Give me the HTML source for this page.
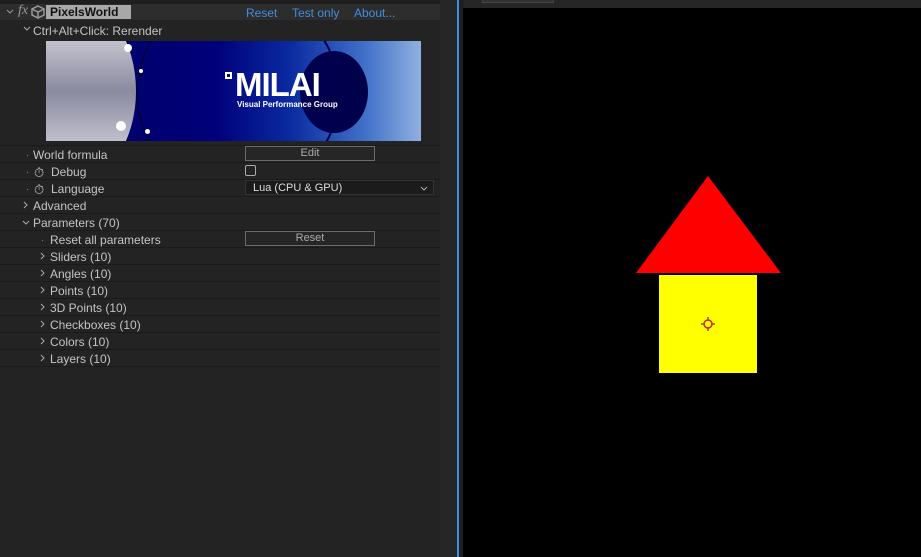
<!DOCTYPE html>
<html><head><style>
body{margin:0;width:921px;height:557px;background:#232323;position:relative;overflow:hidden;font-family:"Liberation Sans",sans-serif;font-size:12px;color:#c4c4c4}
.a{position:absolute}
.row{position:absolute;left:0;width:440px;height:16px;border-bottom:1px solid #1a1a1a;line-height:19px}
.btn{position:absolute;left:245px;width:128px;height:13px;border:1px solid #6a6a6a;background:#262626;text-align:center;line-height:13px;color:#aaa;font-size:11px;top:0px}
.ch{position:absolute;font-size:10px;color:#888}
svg.c{position:absolute}
</style></head><body>
<div class="a" style="left:0;top:0;width:440px;height:4px;background:#1e1e1e"></div>
<div class="a" style="left:440px;top:0;width:17px;height:557px;background:#262626"></div>
<div class="a" style="left:457px;top:0;width:2px;height:557px;background:#3a8ee0"></div>
<div class="a" style="left:459px;top:0;width:5px;height:557px;background:#1f1f1f"></div>
<div class="a" style="left:464px;top:0;width:457px;height:8px;background:#262626"></div>
<div class="a" style="left:482px;top:0;width:70px;height:2px;background:#333;border:1px solid #444;border-top:none"></div>
<div class="a" style="left:463px;top:8px;width:458px;height:549px;background:#000"></div>
<!-- header -->
<div class="a" style="left:0;top:4px;width:440px;height:16px;background:#2d2d2d"></div>
<svg class="c" style="left:6px;top:9px" width="8" height="6"><path d="M1 1L4 4L7 1" fill="none" stroke="#999"/></svg>
<div class="a" style="left:18px;top:3px;font-style:italic;color:#999;font-size:14px;font-family:'Liberation Serif',serif">fx</div>
<svg class="a" style="left:31px;top:5px" width="14" height="14" viewBox="0 0 14 14"><path d="M7 1L13 4V10L7 13L1 10V4Z M1 4L7 7L13 4 M7 7V13" fill="none" stroke="#999" stroke-width="1.5"/></svg>
<div class="a" style="left:46px;top:5px;width:85px;height:14px;background:#a8a8a8;color:#111;font-weight:bold;font-size:12px;line-height:15px;padding-left:4px;box-sizing:border-box">PixelsWorld</div>
<div class="a" style="left:246px;top:6px;color:#3f8fe0;font-size:12px">Reset</div>
<div class="a" style="left:292px;top:6px;color:#3f8fe0;font-size:12px">Test only</div>
<div class="a" style="left:354px;top:6px;color:#3f8fe0;font-size:12px">About...</div>
<svg class="c" style="left:23px;top:26px" width="8" height="6"><path d="M1 1L4 4L7 1" fill="none" stroke="#aaa"/></svg>
<div class="a" style="left:33px;top:24px">Ctrl+Alt+Click: Rerender</div>
<!-- banner -->
<div class="a" style="left:46px;top:41px;width:375px;height:100px;overflow:hidden;background:linear-gradient(90deg,#000060 0%,#00007a 45%,#0a2aa0 65%,#4070c8 85%,#90b0e0 100%)">
<div class="a" style="left:-30px;top:-40px;width:120px;height:180px;border-radius:50%;background:linear-gradient(180deg,#f0f0f4,#8a8aa0 50%,#e8e8ee)"></div>
<div class="a" style="left:90px;top:-50px;width:200px;height:200px;border-radius:50%;border:2px solid #00004a"></div>
<div class="a" style="left:254px;top:10px;width:68px;height:82px;border-radius:50%;background:linear-gradient(90deg,#000050,#00004a)"></div>
<div class="a" style="left:78px;top:3px;width:8px;height:8px;border-radius:50%;background:#fff"></div>
<div class="a" style="left:70px;top:80px;width:10px;height:10px;border-radius:50%;background:#fff"></div>
<div class="a" style="left:99px;top:88px;width:5px;height:5px;border-radius:50%;background:#fff"></div>
<div class="a" style="left:93px;top:28px;width:4px;height:4px;border-radius:50%;background:#fff"></div>
<div class="a" style="left:179px;top:31px;width:7px;height:7px;border:2px solid #fff;box-sizing:border-box"></div>
<div class="a" style="left:189px;top:26px;color:#fff;font-weight:bold;font-size:33px;line-height:36px;letter-spacing:-1px">MILAI</div>
<div class="a" style="left:191px;top:59px;color:#fff;font-weight:bold;font-size:8px">Visual Performance Group</div>
</div>
<div class="a" style="left:0;top:145px;width:440px;height:1px;background:#1a1a1a"></div>
<div class="row" style="top:146px"><span class="ch" style="left:26px">·</span><span class="a" style="left:33px">World formula</span><div class="btn">Edit</div></div>
<div class="row" style="top:163px"><span class="ch" style="left:26px">·</span><span class="a" style="left:34px;top:0;font-size:13px">⏱</span><span class="a" style="left:51px">Debug</span><div class="a" style="left:245px;top:2px;width:9px;height:9px;border:1px solid #aaa;border-radius:2px"></div></div>
<div class="row" style="top:180px"><span class="ch" style="left:26px">·</span><span class="a" style="left:34px;top:0;font-size:13px">⏱</span><span class="a" style="left:51px">Language</span><div class="a" style="left:245px;top:0;width:189px;height:15px;background:#1b1b1b;border:1px solid #333;line-height:15px;font-size:11px;color:#ddd;padding-left:7px;box-sizing:border-box">Lua (CPU &amp; GPU)<svg class="c" style="right:5px;top:5px" width="8" height="6"><path d="M1 1L4 4L7 1" fill="none" stroke="#aaa"/></svg></div></div>
<div class="row" style="top:197px"><svg class="c" style="left:23px;top:4px" width="6" height="8"><path d="M1 1L4 4L1 7" fill="none" stroke="#aaa"/></svg><span class="a" style="left:33px">Advanced</span></div>
<div class="row" style="top:214px"><svg class="c" style="left:22px;top:6px" width="8" height="6"><path d="M1 1L4 4L7 1" fill="none" stroke="#aaa"/></svg><span class="a" style="left:33px">Parameters (70)</span></div>
<div class="row" style="top:231px"><span class="ch" style="left:41px">·</span><span class="a" style="left:50px">Reset all parameters</span><div class="btn">Reset</div></div>
<div class="row" style="top:248px"><svg class="c" style="left:40px;top:4px" width="6" height="8"><path d="M1 1L4 4L1 7" fill="none" stroke="#aaa"/></svg><span class="a" style="left:50px">Sliders (10)</span></div>
<div class="row" style="top:265px"><svg class="c" style="left:40px;top:4px" width="6" height="8"><path d="M1 1L4 4L1 7" fill="none" stroke="#aaa"/></svg><span class="a" style="left:50px">Angles (10)</span></div>
<div class="row" style="top:282px"><svg class="c" style="left:40px;top:4px" width="6" height="8"><path d="M1 1L4 4L1 7" fill="none" stroke="#aaa"/></svg><span class="a" style="left:50px">Points (10)</span></div>
<div class="row" style="top:299px"><svg class="c" style="left:40px;top:4px" width="6" height="8"><path d="M1 1L4 4L1 7" fill="none" stroke="#aaa"/></svg><span class="a" style="left:50px">3D Points (10)</span></div>
<div class="row" style="top:316px"><svg class="c" style="left:40px;top:4px" width="6" height="8"><path d="M1 1L4 4L1 7" fill="none" stroke="#aaa"/></svg><span class="a" style="left:50px">Checkboxes (10)</span></div>
<div class="row" style="top:333px"><svg class="c" style="left:40px;top:4px" width="6" height="8"><path d="M1 1L4 4L1 7" fill="none" stroke="#aaa"/></svg><span class="a" style="left:50px">Colors (10)</span></div>
<div class="row" style="top:350px"><svg class="c" style="left:40px;top:4px" width="6" height="8"><path d="M1 1L4 4L1 7" fill="none" stroke="#aaa"/></svg><span class="a" style="left:50px">Layers (10)</span></div>
<!-- house -->
<svg class="a" style="left:0;top:0" width="921" height="557">
<polygon points="708,176 636,273 781,273" fill="#ff0000"/>
<rect x="659" y="275" width="98" height="98" fill="#ffff00"/>
<circle cx="708" cy="324" r="4" fill="none" stroke="#c03030" stroke-width="1.5"/>
<path d="M708 317V321M708 327V331M701 324H705M711 324H715" stroke="#c03030" stroke-width="1.5"/>
</svg>
</body></html>
